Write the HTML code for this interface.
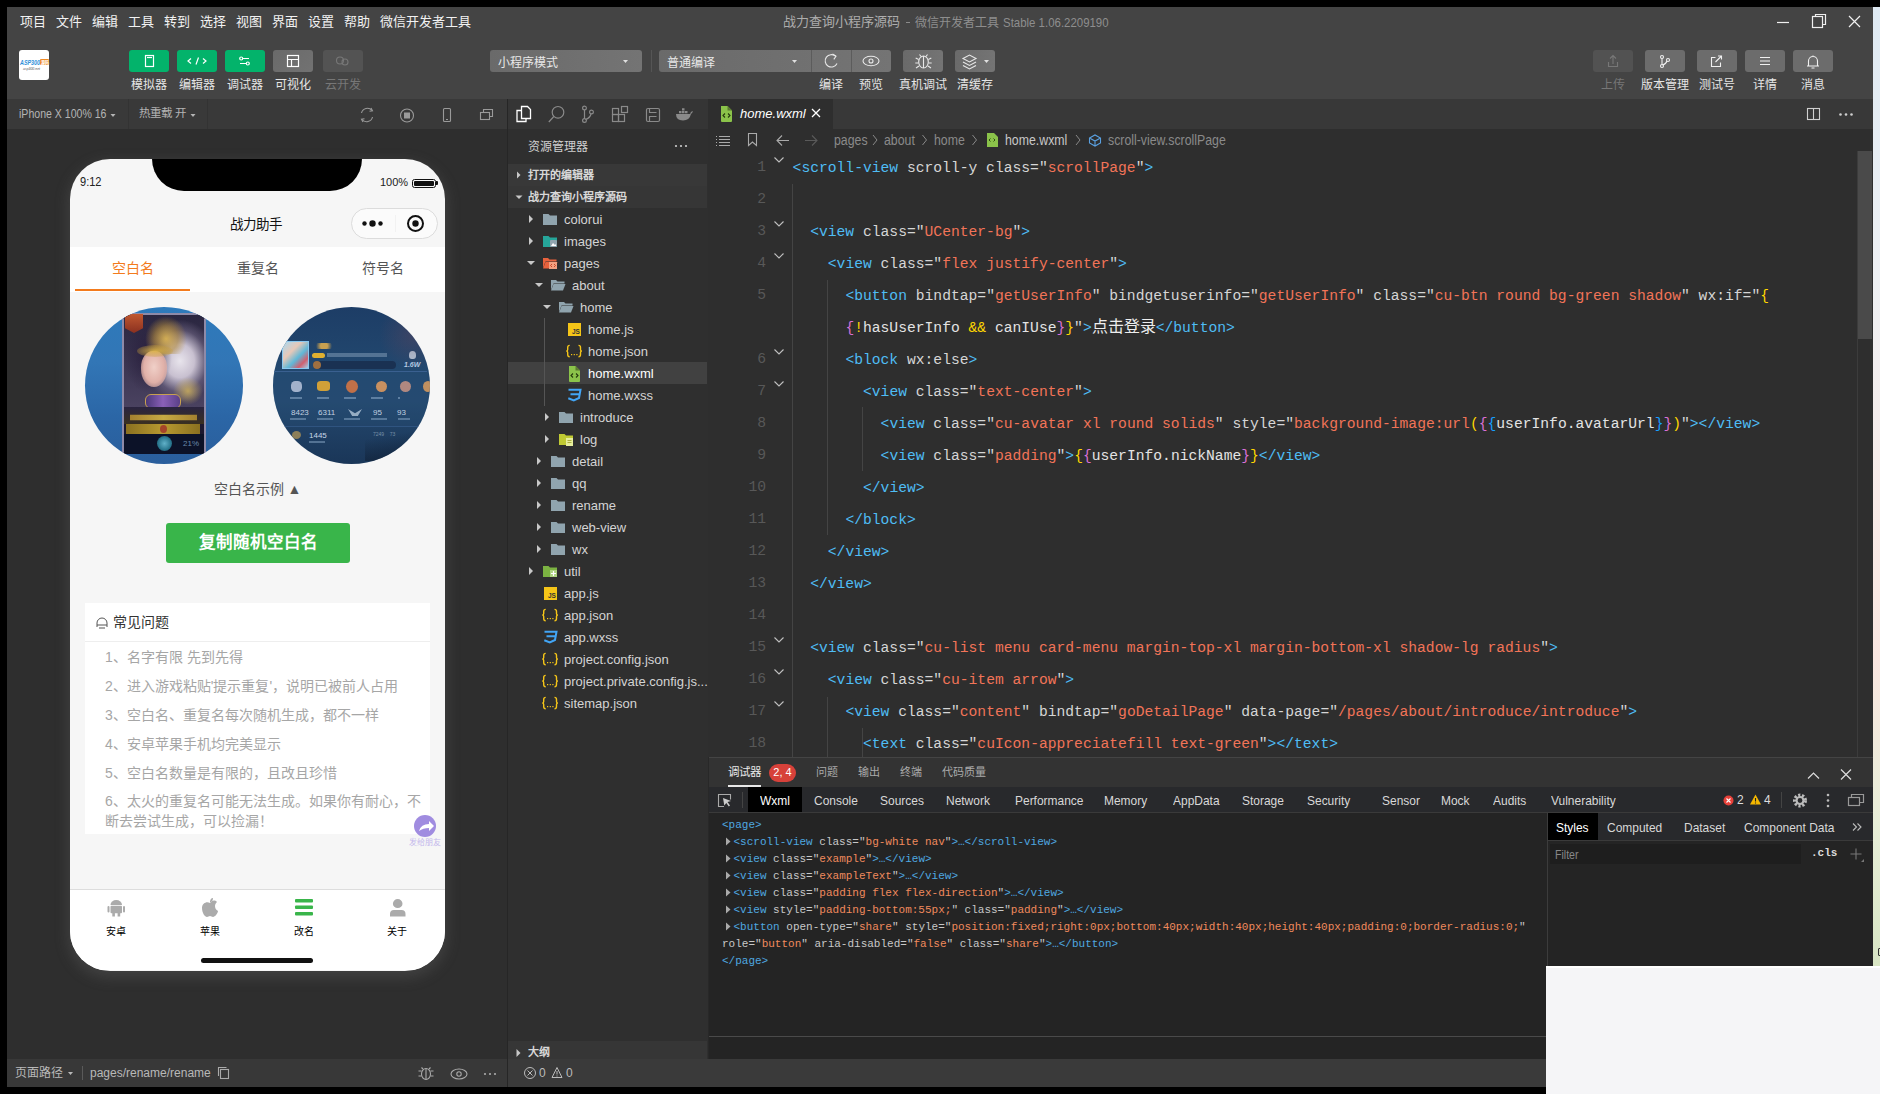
<!DOCTYPE html>
<html lang="zh-CN">
<head>
<meta charset="utf-8">
<style>
*{box-sizing:border-box;margin:0;padding:0}
html,body{width:1880px;height:1094px;overflow:hidden;background:#000;font-family:"Liberation Sans",sans-serif;color:#ddd}
.a{position:absolute}
.t{position:absolute;white-space:nowrap;line-height:1}
.code{font-family:"Liberation Mono",monospace;font-size:14.667px;line-height:18px;color:#ddd}
.lnum{font-family:"Liberation Mono",monospace;font-size:14.667px;line-height:18px;color:#585858;text-align:right}
.cj{font-family:"Liberation Sans",sans-serif;font-size:16px}
.dtab{top:794px;font-size:13px;color:#d8d8d8;transform:scaleX(0.92)!important}
.dcode{font-family:"Liberation Mono",monospace;font-size:11px;line-height:13px}
.sq{transform-origin:0 50%;transform:scaleX(0.88)}
svg{position:absolute;overflow:visible}
/* frame */
#strip{left:1873px;top:7px;width:7px;height:1087px;background:linear-gradient(#dfeaf3 0%,#eef0f3 25%,#f8ebe8 45%,#fae6e0 60%,#e8eed8 75%,#d8e5c4 88%,#d8e5c4 100%)}
#lightrect{left:1546px;top:966px;width:334px;height:128px;background:#f5f5f7}
#hdr{left:7px;top:7px;width:1866px;height:92px;background:#444}
.menu{top:15px;font-size:13px;color:#f2f2f2}
.tbtn{top:50px;width:40px;height:22px;border-radius:3px}
.green{background:#03b36b}
.gray{background:#6c6c6c}
.lbl{top:79px;font-size:12px;color:#e6e6e6;text-align:center;width:60px;margin-left:-30px}
.dd{top:50px;height:22px;border-radius:3px;background:linear-gradient(90deg,#6a6a6a,#747474)}
</style>
</head>
<body>
<div id="strip" class="a"></div>
<div id="hdr" class="a"></div>
<!-- menu -->
<div class="t menu" style="left:20px">项目</div>
<div class="t menu" style="left:56px">文件</div>
<div class="t menu" style="left:92px">编辑</div>
<div class="t menu" style="left:128px">工具</div>
<div class="t menu" style="left:164px">转到</div>
<div class="t menu" style="left:200px">选择</div>
<div class="t menu" style="left:236px">视图</div>
<div class="t menu" style="left:272px">界面</div>
<div class="t menu" style="left:308px">设置</div>
<div class="t menu" style="left:344px">帮助</div>
<div class="t menu" style="left:380px">微信开发者工具</div>
<div class="t" style="left:783px;top:15px;font-size:13px;color:#adadad">战力查询小程序源码</div>
<div class="a" style="left:906px;top:22px;width:4px;height:1px;background:#8a8a8a"></div>
<div class="t" style="left:915px;top:17px;font-size:12px;color:#8e8e8e">微信开发者工具</div>
<div class="t sq" id="ttl" style="left:1003px;top:16px;font-size:13px;color:#8e8e8e">Stable 1.06.2209190</div>

<!-- logo -->
<div class="a" style="left:19px;top:50px;width:30px;height:30px;background:#fff;border-radius:3px"></div>
<svg style="left:0;top:0" width="1" height="1">
 <text x="20" y="64.5" font-family="Liberation Sans" font-size="7" font-weight="bold" font-style="italic" fill="#2e8fd8" textLength="20" lengthAdjust="spacingAndGlyphs">ASP300</text>
 <rect x="40" y="59" width="9" height="6" rx="1" fill="#f08a24"/>
 <text x="40.5" y="64" font-family="Liberation Sans" font-size="5" font-weight="bold" fill="#fff" textLength="8" lengthAdjust="spacingAndGlyphs">源码</text>
 <text x="23" y="69.5" font-family="Liberation Sans" font-size="4" font-style="italic" fill="#555" textLength="17" lengthAdjust="spacingAndGlyphs">asp300.net</text>
</svg>
<!-- toolbar buttons -->
<div class="a tbtn green" style="left:129px"></div>
<div class="a tbtn green" style="left:177px"></div>
<div class="a tbtn green" style="left:225px"></div>
<div class="a tbtn gray" style="left:273px;background:linear-gradient(135deg,#6a6a6a,#727272)"></div>
<div class="a tbtn" style="left:323px;background:#535353"></div>
<svg style="left:0;top:0" width="1" height="1">
 <g fill="none" stroke="#fff" stroke-width="1.2">
  <rect x="145.5" y="55.5" width="8" height="11"/><line x1="147" y1="57.5" x2="152" y2="57.5"/>
  <path d="M191 58.5 l-3 2.5 l3 2.5 M203 58.5 l3 2.5 l-3 2.5 M198.5 57.5 l-2.5 7"/>
  <path d="M243 58.5 h6 M240 63.5 h6"/><circle cx="241.2" cy="58.5" r="1.5"/><circle cx="247.8" cy="63.5" r="1.5"/>
  <rect x="287.5" y="55.5" width="11" height="11"/><path d="M287.5 59.5 h11 M291.5 59.5 v7"/>
 </g>
 <g fill="none" stroke="#777" stroke-width="1.1"><circle cx="340" cy="60.5" r="3.5"/><circle cx="345" cy="62" r="3"/></g>
</svg>
<div class="t lbl" style="left:149px">模拟器</div>
<div class="t lbl" style="left:197px">编辑器</div>
<div class="t lbl" style="left:245px">调试器</div>
<div class="t lbl" style="left:293px">可视化</div>
<div class="t lbl" style="left:343px;color:#777">云开发</div>
<!-- dropdowns -->
<div class="a dd" style="left:490px;width:152px"></div>
<div class="t" style="left:498px;top:57px;font-size:12px;color:#e8e8e8">小程序模式</div>
<div class="a" style="left:651px;top:50px;width:1px;height:22px;background:#555"></div>
<div class="a dd" style="left:659px;width:232px"></div>
<div class="a" style="left:811px;top:50px;width:1px;height:22px;background:#5c5c5c"></div>
<div class="a" style="left:851px;top:50px;width:1px;height:22px;background:#5c5c5c"></div>
<div class="t" style="left:667px;top:57px;font-size:12px;color:#e8e8e8">普通编译</div>
<div class="a dd" style="left:903px;width:40px"></div>
<div class="a dd" style="left:955px;width:40px"></div>
<svg style="left:0;top:0" width="1" height="1">
 <g fill="#e0e0e0"><path d="M623 60 h5 l-2.5 3z"/><path d="M792 60 h5 l-2.5 3z"/><path d="M984 60 h5 l-2.5 3z"/></g>
 <g fill="none" stroke="#e8e8e8" stroke-width="1.1">
  <path d="M835.5 56.2 A6.2 6.2 0 1 0 837 63.5"/><path d="M832.5 54 l3.5 2.2 l-2.2 3.2"/>
  <ellipse cx="871" cy="61" rx="8" ry="4.8"/><circle cx="871" cy="61" r="2"/>
  <ellipse cx="923.5" cy="62" rx="4.8" ry="6"/><path d="M923.5 56 v12 M918.7 59.5 l-3 -1.5 M928.3 59.5 l3 -1.5 M918.5 63 h-3.2 M928.5 63 h3.2 M919 66 l-3 2 M928 66 l3 2 M921 56.5 l-1.5 -2 M926 56.5 l1.5 -2"/>
  <path d="M963 58.5 l6.5 -3.5 l6.5 3.5 l-6.5 3.5z M963 62 l6.5 3.5 l6.5 -3.5 M963 65.5 l6.5 3.5 l6.5 -3.5"/>
 </g>
</svg>
<div class="t lbl" style="left:831px">编译</div>
<div class="t lbl" style="left:871px">预览</div>
<div class="t lbl" style="left:923px;width:70px;margin-left:-35px">真机调试</div>
<div class="t lbl" style="left:975px">清缓存</div>
<!-- right buttons -->
<div class="a tbtn" style="left:1593px;background:#525252"></div>
<div class="a tbtn gray" style="left:1645px"></div>
<div class="a tbtn gray" style="left:1697px"></div>
<div class="a tbtn gray" style="left:1745px"></div>
<div class="a tbtn gray" style="left:1793px"></div>
<svg style="left:0;top:0" width="1" height="1">
 <g fill="none" stroke="#777" stroke-width="1.1"><path d="M1608.5 62 v4.5 h9 v-4.5 M1613 64 v-8 M1610 58.5 l3-3 l3 3"/></g>
 <g fill="none" stroke="#f0f0f0" stroke-width="1.1">
  <circle cx="1662" cy="57" r="1.5"/><circle cx="1662" cy="66" r="1.5"/><circle cx="1668" cy="60" r="1.5"/><path d="M1662 58.5 v6 M1667 61 q-1 3 -4.5 4"/>
  <path d="M1715.5 57.5 h-4 v9 h9 v-4 M1718 56 h3.5 v3.5 M1721.5 56 l-6 6"/>
  <path d="M1760 57.5 h10 M1760 61 h10 M1760 64.5 h10"/>
  <path d="M1807 66 h12 M1808.5 66 v-5 a4.5 4.5 0 0 1 9 0 v5 M1811.5 68 h3 M1813 55.5 v1"/>
 </g>
</svg>
<div class="t lbl" style="left:1613px;color:#777">上传</div>
<div class="t lbl" style="left:1665px">版本管理</div>
<div class="t lbl" style="left:1717px">测试号</div>
<div class="t lbl" style="left:1765px">详情</div>
<div class="t lbl" style="left:1813px">消息</div>
<!-- window controls -->
<svg style="left:0;top:0" width="1" height="1">
 <g fill="none" stroke="#f0f0f0" stroke-width="1.2">
  <path d="M1777 22.5 h12"/>
  <rect x="1812.5" y="16.5" width="10" height="11"/><path d="M1815.5 16.5 v-2 h10 v10 h-3"/>
  <path d="M1849 16 l11 11 M1860 16 l-11 11"/>
 </g>
</svg>

<!-- ===== simulator panel ===== -->
<div class="a" style="left:7px;top:99px;width:500px;height:988px;background:#2e2e2e"></div>
<div class="a" style="left:7px;top:99px;width:500px;height:30px;background:#393939"></div>
<div class="a" style="left:128px;top:99px;width:1px;height:30px;background:#333"></div>
<div class="a" style="left:207px;top:99px;width:1px;height:30px;background:#333"></div>
<div class="a" style="left:507px;top:99px;width:1px;height:988px;background:#262626"></div>
<div class="t sq" id="iph" style="left:19px;top:108px;font-size:12px;color:#b4b4b4">iPhone X 100% 16</div>
<div class="t" style="left:139px;top:108px;font-size:11.5px;color:#b4b4b4">热重载 开</div>
<svg style="left:0;top:1px" width="1" height="1">
 <g fill="#b4b4b4"><path d="M110.5 113 h5 l-2.5 3z"/><path d="M190.5 113 h5 l-2.5 3z"/></g>
 <g fill="none" stroke="#9a9a9a" stroke-width="1.1">
  <path d="M361.5 112 a6 6 0 0 1 10.5 -2.5 M372.5 116 a6 6 0 0 1 -10.5 2.5"/><path d="M371 107 l1.5 2.8 l-3 0.5 M363 121 l-1.5 -2.8 l3 -0.5"/>
  <circle cx="407" cy="114.5" r="6.5"/>
  <rect x="443.5" y="107.5" width="7" height="13" rx="1"/><path d="M446 118.5 h2"/>
  <rect x="480.5" y="111.5" width="9" height="7"/><path d="M483.5 111.5 v-3 h9 v7 h-3"/>
 </g>
 <rect x="404" y="111.5" width="6" height="6" fill="#9a9a9a"/>
</svg>
<div class="a" style="left:7px;top:1059px;width:500px;height:28px;background:#383838"></div>
<div class="t" style="left:15px;top:1067px;font-size:12px;color:#b8b8b8">页面路径</div>
<div class="a" style="left:82px;top:1066px;width:1px;height:14px;background:#5a5a5a"></div>
<div class="t" style="left:90px;top:1067px;font-size:12px;color:#b8b8b8">pages/rename/rename</div>
<svg style="left:0;top:0" width="1" height="1">
 <g fill="#b8b8b8"><path d="M68 1072 h5 l-2.5 3z"/></g>
 <g fill="none" stroke="#aaa" stroke-width="1.1">
  <rect x="220.5" y="1069.5" width="8" height="9"/><path d="M218.5 1076 v-8.5 h8"/>
  <ellipse cx="426" cy="1074" rx="4.5" ry="5.5"/><path d="M426 1068.5 v11 M421.5 1071 h-3 M430.5 1071 h3 M421.5 1076 h-3 M430.5 1076 h3 M423 1069 l-1.5-1.5 M429 1069 l1.5-1.5"/>
  <ellipse cx="459" cy="1074" rx="8" ry="5"/><circle cx="459" cy="1074" r="2.2"/>
 </g>
 <g fill="#aaa"><circle cx="485" cy="1074" r="1.1"/><circle cx="490" cy="1074" r="1.1"/><circle cx="495" cy="1074" r="1.1"/></g>
</svg>
<!-- phone -->
<div class="a" style="left:70px;top:159px;width:375px;height:812px;border-radius:40px;background:#f6f6f6;box-shadow:0 5px 14px 2px rgba(110,110,110,0.3);overflow:hidden">
 <div class="a" style="left:82px;top:-2px;width:210px;height:34px;background:#000;border-radius:0 0 32px 32px"></div>
 <div class="t" style="left:9.5px;top:17px;font-size:12px;color:#222;transform:scaleX(.92);transform-origin:0 0">9:12</div>
 <div class="t" style="left:310px;top:18px;font-size:11px;color:#222">100%</div>
 <div class="a" style="left:342px;top:19.5px;width:24px;height:9.5px;border:1.5px solid #111;border-radius:2.5px;padding:1px"><div style="width:100%;height:100%;background:#111;border-radius:1px"></div></div>
 <div class="a" style="left:366px;top:22px;width:2px;height:4px;background:#111;border-radius:0 1px 1px 0"></div>
 <div class="t" style="left:-2px;top:59px;width:375px;text-align:center;font-size:13.5px;color:#111">战力助手</div>
 <div class="a" style="left:281px;top:48.5px;width:87px;height:31px;border-radius:16px;border:1px solid #dcdcdc;background:#fbfbfb"></div>
 <div class="a" style="left:325px;top:56px;width:1px;height:17px;background:#f2f2f2"></div>
 <svg style="left:0;top:0" width="1" height="1">
  <g fill="#111"><circle cx="294.5" cy="64.5" r="2.2"/><circle cx="302.5" cy="64.5" r="3.2"/><circle cx="310.5" cy="64.5" r="2.2"/></g>
  <circle cx="345.5" cy="64.5" r="7.5" fill="none" stroke="#111" stroke-width="2"/><circle cx="345.5" cy="64.5" r="3.2" fill="#111"/>
 </svg>
 <!-- tabs -->
 <div class="a" style="left:0;top:88px;width:375px;height:45px;background:#fff"></div>
 <div class="t" style="left:5px;top:102px;width:115px;text-align:center;font-size:14px;color:#f37b1d">空白名</div>
 <div class="t" style="left:130px;top:102px;width:115px;text-align:center;font-size:14px;color:#555">重复名</div>
 <div class="t" style="left:255px;top:102px;width:115px;text-align:center;font-size:14px;color:#555">符号名</div>
 <div class="a" style="left:5px;top:130px;width:115px;height:2px;background:#f37b1d"></div>

 <!-- content -->
 <div class="a" style="left:15px;top:148px;width:158px;height:157px;border-radius:50%;overflow:hidden;background:linear-gradient(180deg,#2e7abb 0%,#3276b6 35%,#2b66a6 70%,#2a5e9c 100%)">
  <div class="a" style="left:37px;top:6px;width:84px;height:141px;background:#1c1830;border:2px solid #8e8aa8;border-radius:2px"></div>
  <div class="a" style="left:39px;top:8px;width:80px;height:92px;background:radial-gradient(ellipse 30% 40% at 30% 45%,rgba(40,30,60,.9),transparent 100%),radial-gradient(ellipse 45% 45% at 70% 50%,#e8e4ec 0%,#c8c0d0 40%,rgba(120,110,140,.5) 75%,transparent 100%),linear-gradient(180deg,#2a2640 0%,#4a4260 100%)"></div>
  <div class="a" style="left:60px;top:9px;width:42px;height:38px;background:radial-gradient(ellipse at 50% 60%,rgba(220,180,80,.9) 0%,rgba(180,140,60,.6) 40%,transparent 70%)"></div>
  <div class="a" style="left:56px;top:44px;width:26px;height:36px;border-radius:45% 45% 50% 50%;background:radial-gradient(ellipse at 50% 45%,#f0d0c8 0%,#e0b0a8 55%,rgba(200,150,140,.3) 100%)"></div>
  <div class="a" style="left:52px;top:38px;width:36px;height:12px;border-radius:50%;background:radial-gradient(ellipse,rgba(220,180,70,.9) 0%,rgba(200,160,60,.4) 60%,transparent 100%)"></div>
  <div class="a" style="left:40px;top:7px;width:18px;height:19px;background:linear-gradient(#c05830,#8a3020);clip-path:polygon(0 0,100% 0,100% 75%,50% 100%,0 75%)"></div>
  <div class="a" style="left:88px;top:70px;width:30px;height:28px;background:radial-gradient(ellipse at 50% 50%,rgba(210,180,90,.8),transparent 70%)"></div>
  <div class="a" style="left:60px;top:87px;width:36px;height:15px;border-radius:6px;background:linear-gradient(90deg,#4a3878,#8a60b8,#5a4088);border:1px solid #c8a050"></div>
  <div class="a" style="left:39px;top:100px;width:80px;height:17px;background:linear-gradient(180deg,#2a2440,#3a3020)"></div>
  <div class="a" style="left:45px;top:106px;width:67px;height:9px;background:linear-gradient(90deg,#b89030,#e0c048,#b89030);opacity:.85;clip-path:polygon(0 20%,100% 20%,100% 80%,0 80%)"></div>
  <div class="a" style="left:41px;top:117px;width:74px;height:10px;background:linear-gradient(90deg,#8a7020,#b89a30,#8a7020)"></div>
  <div class="a" style="left:75px;top:118px;width:7px;height:8px;border-radius:50%;background:#a03028;opacity:.8"></div>
  <div class="a" style="left:39px;top:127px;width:80px;height:20px;background:#0c1228"></div>
  <div class="a" style="left:72px;top:129px;width:15px;height:15px;border-radius:50%;background:radial-gradient(circle,#60b0c8 0%,#2a7890 60%,#184858 100%)"></div>
  <div class="t" style="left:98px;top:133px;font-size:8px;color:#6a88a8">21%</div>
 </div>
 <div class="a" style="left:203px;top:148px;width:157px;height:157px;border-radius:50%;overflow:hidden;background:linear-gradient(180deg,#1d3d66 0%,#22486f 40%,#24496f 60%,#1f3f63 80%,#1a3658 100%)"><div class="a" style="left:-3px;top:-6px;width:170px;height:170px">
  <div class="a" style="left:0;top:71px;width:157px;height:54px;background:rgba(40,80,120,.25)"></div>
  <div class="a" style="left:12px;top:40px;width:27px;height:28px;background:linear-gradient(135deg,#a8d8f0 0%,#e8c8b8 35%,#60b8d8 60%,#d06070 80%,#a0d0e8 100%);border:1px solid #8ac8f0"></div>
  <div class="a" style="left:43px;top:42px;width:22px;height:6px;background:radial-gradient(circle,#c8a050 30%,transparent 70%)"></div>
  <div class="a" style="left:42px;top:51.5px;width:13px;height:5px;border-radius:3px;background:#e0b030"></div>
  <div class="a" style="left:57px;top:52px;width:60px;height:4px;background:rgba(180,200,220,.35)"></div>
  <div class="a" style="left:43px;top:60px;width:83px;height:8px;border-radius:4px;background:#1a3152"></div>
  <div class="a" style="left:43px;top:60px;width:8px;height:8px;border-radius:50%;background:#a07040"></div>
  <div class="t" style="left:134px;top:60px;font-size:7px;font-style:italic;font-weight:bold;color:#b8d0e8">1.6W</div>
  <div class="a" style="left:139px;top:50px;width:7px;height:8px;border-radius:50% 50% 40% 40%;background:#d8e4f0;opacity:.8"></div>
  <div class="a" style="left:0;top:70px;width:157px;height:1px;background:#3a6090"></div>
  <div class="a" style="left:21px;top:80px;width:11px;height:11px;border-radius:40%;background:#b8c4dc;opacity:.85"></div>
  <div class="a" style="left:47px;top:80px;width:13px;height:10px;border-radius:30%;background:#d0a038"></div>
  <div class="a" style="left:76px;top:79px;width:12px;height:13px;border-radius:50%;background:#c07048"></div>
  <div class="a" style="left:106px;top:80px;width:11px;height:11px;border-radius:50%;background:#c89060"></div>
  <div class="a" style="left:130px;top:80px;width:11px;height:11px;border-radius:50%;background:#b08880"></div>
  <div class="a" style="left:153px;top:80px;width:10px;height:11px;border-radius:50%;background:#c09060"></div>
  <div class="a" style="left:20px;top:96px;width:110px;height:2px;background:repeating-linear-gradient(90deg,rgba(150,180,210,.5) 0 12px,transparent 12px 27px)"></div>
  <div class="t" style="left:21px;top:108px;font-size:8px;color:#c0d0e0">8423</div>
  <div class="t" style="left:48px;top:108px;font-size:8px;color:#c0d0e0">6311</div>
  <div class="a" style="left:78px;top:108px;width:14px;height:7px;background:#c8d8e8;opacity:.7;clip-path:polygon(0 0,50% 60%,100% 0,70% 100%,30% 100%)"></div>
  <div class="t" style="left:103px;top:108px;font-size:8px;color:#c0d0e0">95</div>
  <div class="t" style="left:127px;top:108px;font-size:8px;color:#c0d0e0">93</div>
  <div class="a" style="left:20px;top:117px;width:120px;height:2px;background:repeating-linear-gradient(90deg,rgba(150,180,210,.45) 0 16px,transparent 16px 27px)"></div>
  <div class="a" style="left:0;top:125px;width:157px;height:1px;background:#2f5480"></div>
  <div class="a" style="left:22px;top:130px;width:9px;height:8px;border-radius:50%;background:#a89058;opacity:.8"></div>
  <div class="t" style="left:39px;top:131px;font-size:8px;color:#c8d8e8">1445</div>
  <div class="a" style="left:39px;top:140px;width:16px;height:2px;background:rgba(150,180,210,.45)"></div>
  <div class="t" style="left:103px;top:131px;font-size:5px;color:#7890a8">7249 &nbsp;&nbsp; 73</div>
  <div class="a" style="left:95px;top:130px;width:62px;height:30px;background:linear-gradient(170deg,transparent 20%,rgba(15,30,50,.8) 100%)"></div>
  <div class="a" style="left:110px;top:10px;width:47px;height:60px;background:radial-gradient(circle at 70% 40%,rgba(110,70,90,.35),transparent 70%)"></div>
 </div></div>
 <div class="t" style="left:0;top:323px;width:375px;text-align:center;font-size:14px;color:#555">空白名示例 ▲</div>
 <div class="a" style="left:96px;top:364px;width:184px;height:40px;border-radius:3px;background:#39b54a"></div>
 <div class="t" style="left:96px;top:375px;width:184px;text-align:center;font-size:16.5px;font-weight:bold;color:#fff">复制随机空白名</div>
 <!-- faq card -->
 <div class="a" style="left:15px;top:444px;width:345px;height:231px;background:#fff"></div>
 <div class="a" style="left:15px;top:482px;width:345px;height:1px;background:#eee"></div>
 <svg style="left:0;top:0" width="1" height="1"><g fill="none" stroke="#555" stroke-width="1"><path d="M27 468 v-4 a5 5 0 0 1 10 0 v4 M27 466 h10 M29 469 h6"/></g></svg>
 <div class="t" style="left:43px;top:456px;font-size:14px;color:#333">常见问题</div>
 <div class="t" style="left:35px;top:491px;font-size:14px;color:#a6a6a6">1、名字有限 先到先得</div>
 <div class="t" style="left:35px;top:520px;font-size:14px;color:#a6a6a6">2、进入游戏粘贴'提示重复'，说明已被前人占用</div>
 <div class="t" style="left:35px;top:549px;font-size:14px;color:#a6a6a6">3、空白名、重复名每次随机生成，都不一样</div>
 <div class="t" style="left:35px;top:578px;font-size:14px;color:#a6a6a6">4、安卓苹果手机均完美显示</div>
 <div class="t" style="left:35px;top:607px;font-size:14px;color:#a6a6a6">5、空白名数量是有限的，且改且珍惜</div>
 <div class="t" style="left:35px;top:635px;font-size:14px;color:#a6a6a6">6、太火的重复名可能无法生成。如果你有耐心，不</div>
 <div class="t" style="left:35px;top:655px;font-size:14px;color:#a6a6a6">断去尝试生成，可以捡漏！</div>
 <div class="a" style="left:344px;top:656px;width:22px;height:22px;border-radius:50%;background:#a08ce0"></div>
 <svg style="left:0;top:0" width="1" height="1"><path d="M349 672 q2 -7 10 -7 v-3 l5 5 l-5 5 v-3 q-6 0 -10 3z" fill="#fff"/></svg>
 <div class="t" style="left:339px;top:680px;font-size:8px;color:#c4b8ec">发给朋友</div>
 <!-- tabbar -->
 <div class="a" style="left:0;top:730px;width:375px;height:81px;background:#fff;border-top:1px solid #ddd"></div>
 <svg style="left:0;top:0" width="1" height="1">
  <g fill="#ababab">
   <path d="M40.5 746 a5.75 5 0 0 1 11.5 0z"/><rect x="40.5" y="746.8" width="11.5" height="7.5" rx="1"/><rect x="37.5" y="747" width="2" height="6.5" rx="1"/><rect x="53" y="747" width="2" height="6.5" rx="1"/><rect x="42.3" y="754" width="2.6" height="3.5"/><rect x="47.6" y="754" width="2.6" height="3.5"/>
   <path d="M140 744 c-3 -2 -8 0 -8 5 c0 5 3 9 5 9 c1 0 2 -1 3 -1 c1 0 2 1 3 1 c2 0 5 -4 5 -6 c-2 -1 -3 -3 -3 -5 c0 -2 1 -3 2 -4 c-2 -2 -5 -2 -7 1z M140 743 c0 -2 1 -4 3 -4 c0 2 -1 4 -3 4z"/>
   <path d="M327.7 740 a4.8 4.8 0 0 1 4.8 4.8 a4.8 4.3 0 0 1 -4.8 4.3 a4.8 4.3 0 0 1 -4.8 -4.3 a4.8 4.8 0 0 1 4.8 -4.8z M320 757.5 v-2.5 a4 4 0 0 1 4 -4 h7.5 a4 4 0 0 1 4 4 v2.5z"/>
  </g>
  <g fill="#39b54a"><rect x="225" y="740" width="18" height="3.5" rx="1"/><rect x="225" y="746.5" width="18" height="3.5" rx="1"/><rect x="225" y="753" width="18" height="3.5" rx="1"/></g>
 </svg>
 <div class="t" style="left:21px;top:768px;width:50px;text-align:center;font-size:10px;color:#000">安卓</div>
 <div class="t" style="left:115px;top:768px;width:50px;text-align:center;font-size:10px;color:#000">苹果</div>
 <div class="t" style="left:209px;top:768px;width:50px;text-align:center;font-size:10px;color:#000">改名</div>
 <div class="t" style="left:302px;top:768px;width:50px;text-align:center;font-size:10px;color:#000">关于</div>
 <div class="a" style="left:131px;top:799px;width:112px;height:5px;border-radius:3px;background:#111"></div>
</div>


<!-- ===== activity bar + explorer ===== -->
<div class="a" style="left:508px;top:99px;width:200px;height:960px;background:#2f2f2f"></div>
<div class="a" style="left:508px;top:99px;width:200px;height:30px;background:#353535"></div>
<svg style="left:0;top:0" width="1" height="1">
 <g fill="none" stroke="#fff" stroke-width="1.3"><path d="M521 110.5 h-4 v11 h9 v-3"/><path d="M521.5 106.5 h6 l3 3 v9 h-9z"/></g>
 <g fill="none" stroke="#8a8a8a" stroke-width="1.2">
  <circle cx="558" cy="112.3" r="5.8"/><path d="M553.8 116.5 l-5 5.5"/>
  <circle cx="584.5" cy="108" r="1.9"/><circle cx="584.5" cy="120.5" r="1.9"/><circle cx="591.5" cy="112" r="1.9"/><path d="M584.5 110 v8.6 M591 114 q-1 4 -5.5 5.5"/>
  <rect x="612.5" y="114.5" width="6" height="7"/><rect x="618.5" y="114.5" width="6" height="7"/><rect x="612.5" y="108.5" width="6" height="6"/><rect x="621.5" y="106.5" width="6" height="6"/>
  <rect x="646.5" y="108.5" width="13" height="13" rx="1.5"/><path d="M649.5 108.5 v4 h7 M649.5 121.5 v-5 h7"/>
 </g>
 <path d="M676 114 h15 q-1.5 6.5 -8 6.5 q-7 0 -7 -6.5z M679 111 h2.5 v2.3 h-2.5z M682 111 h2.5 v2.3 h-2.5z M685 111 h2.5 v2.3 h-2.5z M682 108.3 h2.5 v2.3 h-2.5z M690 113.5 q1 -2.5 3 -2.5 q-0.5 2 -2 3z" fill="#8a8a8a"/>
</svg>
<div class="t" style="left:528px;top:141px;font-size:12px;color:#d0d0d0">资源管理器</div>
<svg style="left:0;top:0" width="1" height="1"><g fill="#ccc"><circle cx="676" cy="146" r="1.1"/><circle cx="681" cy="146" r="1.1"/><circle cx="686" cy="146" r="1.1"/></g></svg>
<div class="a" style="left:508px;top:164px;width:199px;height:22px;background:#383838"></div>
<div class="a" style="left:508px;top:186px;width:199px;height:22px;background:#363636"></div>
<svg style="left:0;top:0" width="1" height="1"><path d="M517 171.5 l3.5 3.5 l-3.5 3.5z" fill="#c8c8c8"/><path d="M515.5 195.5 h7 l-3.5 3.5z" fill="#c8c8c8"/></svg>
<div class="t" style="left:528px;top:170px;font-size:11px;font-weight:bold;color:#d8d8d8">打开的编辑器</div>
<div class="t" style="left:528px;top:192px;font-size:11px;font-weight:bold;color:#d8d8d8">战力查询小程序源码</div>
<div class="a" style="left:508px;top:362px;width:199px;height:22px;background:#414141"></div>
<div class="a" style="left:544px;top:318px;width:1px;height:88px;background:#555"></div>
<div class="a" style="left:708px;top:129px;width:1px;height:930px;background:#282828"></div>
<div class="t" style="left:564px;top:213px;font-size:13px;color:#d4d4d4">colorui</div>
<div class="t" style="left:564px;top:235px;font-size:13px;color:#d4d4d4">images</div>
<div class="t" style="left:564px;top:257px;font-size:13px;color:#d4d4d4">pages</div>
<div class="t" style="left:572px;top:279px;font-size:13px;color:#d4d4d4">about</div>
<div class="t" style="left:580px;top:301px;font-size:13px;color:#d4d4d4">home</div>
<div class="t" style="left:588px;top:323px;font-size:13px;color:#d4d4d4">home.js</div>
<div class="t" style="left:588px;top:345px;font-size:13px;color:#d4d4d4">home.json</div>
<div class="t" style="left:588px;top:367px;font-size:13px;color:#fff">home.wxml</div>
<div class="t" style="left:588px;top:389px;font-size:13px;color:#d4d4d4">home.wxss</div>
<div class="t" style="left:580px;top:411px;font-size:13px;color:#d4d4d4">introduce</div>
<div class="t" style="left:580px;top:433px;font-size:13px;color:#d4d4d4">log</div>
<div class="t" style="left:572px;top:455px;font-size:13px;color:#d4d4d4">detail</div>
<div class="t" style="left:572px;top:477px;font-size:13px;color:#d4d4d4">qq</div>
<div class="t" style="left:572px;top:499px;font-size:13px;color:#d4d4d4">rename</div>
<div class="t" style="left:572px;top:521px;font-size:13px;color:#d4d4d4">web-view</div>
<div class="t" style="left:572px;top:543px;font-size:13px;color:#d4d4d4">wx</div>
<div class="t" style="left:564px;top:565px;font-size:13px;color:#d4d4d4">util</div>
<div class="t" style="left:564px;top:587px;font-size:13px;color:#d4d4d4">app.js</div>
<div class="t" style="left:564px;top:609px;font-size:13px;color:#d4d4d4">app.json</div>
<div class="t" style="left:564px;top:631px;font-size:13px;color:#d4d4d4">app.wxss</div>
<div class="t" style="left:564px;top:653px;font-size:13px;color:#d4d4d4">project.config.json</div>
<div class="t" style="left:564px;top:675px;font-size:13px;color:#d4d4d4">project.private.config.js...</div>
<div class="t" style="left:564px;top:697px;font-size:13px;color:#d4d4d4">sitemap.json</div>
<svg style="left:0;top:0" width="1" height="1"><path d="M529 215 l4 4 l-4 4z" fill="#c8c8c8"/><path d="M543 214 h5.5 l1.5 1.5 h7 v9.5 h-14z" fill="#90a4ae"/><path d="M529 237 l4 4 l-4 4z" fill="#c8c8c8"/><path d="M543 236 h5.5 l1.5 1.5 h7 v9.5 h-14z" fill="#26a69a"/><rect x="550" y="240" width="7" height="7" rx="1" fill="#90a4ae"/><path d="M551 246 l2-3 l2 2 l1-1 v2z" fill="#fff"/><path d="M527 261 h8 l-4 4z" fill="#c8c8c8"/><path d="M543 258 h5 l1.5 1.5 h7 v2 h-11 l-2.5 6.5z" fill="#e8623d"/><path d="M545.5 262 h12 l-2.5 6.5 h-12z" fill="#e8623d"/><rect x="549" y="262" width="8" height="7" fill="#f3a080"/><path d="M552 264 l-1.5 1.5 l1.5 1.5 M554 264 l1.5 1.5 l-1.5 1.5" stroke="#c03010" fill="none" stroke-width=".8"/><path d="M535 283 h8 l-4 4z" fill="#c8c8c8"/><path d="M551 280 h5 l1.5 1.5 h7 v2 h-11 l-2.5 6.5z" fill="#90a4ae"/><path d="M553.5 284 h12 l-2.5 6.5 h-12z" fill="#90a4ae"/><path d="M543 305 h8 l-4 4z" fill="#c8c8c8"/><path d="M559 302 h5 l1.5 1.5 h7 v2 h-11 l-2.5 6.5z" fill="#90a4ae"/><path d="M561.5 306 h12 l-2.5 6.5 h-12z" fill="#90a4ae"/><rect x="568" y="323" width="13" height="13" fill="#f5c518"/><text x="572" y="334" font-size="6.5" font-family="Liberation Sans" font-weight="bold" fill="#333">JS</text><g fill="none" stroke="#f5c518" stroke-width="1.4"><path d="M569.7 345.4 q-2 0 -2 2 v2 q0 1.6 -1.4 1.6 q1.4 0 1.4 1.6 v2 q0 2.2 2 2.2 M578.5 345.4 q2 0 2 2 v2 q0 1.6 1.4 1.6 q-1.4 0 -1.4 1.6 v2 q0 2.2 -2 2.2"/></g><g fill="#f5c518"><rect x="571.0" y="354.0" width="1.2" height="1.2"/><rect x="573.7" y="354.0" width="1.2" height="1.2"/><rect x="576.3" y="354.0" width="1.2" height="1.2"/></g><path d="M569.0 366.0 h6.5 l4.5 4.5 v10.5 q0 1 -1 1 h-9 q-1 0 -1 -1z" fill="#8bc34a"/><path d="M575.5 366.0 v4.5 h4.5z" fill="#5a7a30"/><path d="M573.0 373.5 l-2 2 l2 2 M576.0 373.5 l2 2 l-2 2" stroke="#243a0c" fill="none" stroke-width="1.1"/><path d="M568.5 389.8 H580.5 L579.0 398.0 L573.8 400.5 L568.3 398.3 M570.5 394.2 H579.7" stroke="#42a5f5" fill="none" stroke-width="2"/><path d="M545 413 l4 4 l-4 4z" fill="#c8c8c8"/><path d="M559 412 h5.5 l1.5 1.5 h7 v9.5 h-14z" fill="#90a4ae"/><path d="M545 435 l4 4 l-4 4z" fill="#c8c8c8"/><path d="M559 434 h5.5 l1.5 1.5 h7 v9.5 h-14z" fill="#c0ca33"/><rect x="566" y="438" width="7" height="8" fill="#e6ee9c"/><path d="M567.5 440.5 h4 M567.5 442.5 h4" stroke="#9e9d24" stroke-width=".8"/><path d="M537 457 l4 4 l-4 4z" fill="#c8c8c8"/><path d="M551 456 h5.5 l1.5 1.5 h7 v9.5 h-14z" fill="#90a4ae"/><path d="M537 479 l4 4 l-4 4z" fill="#c8c8c8"/><path d="M551 478 h5.5 l1.5 1.5 h7 v9.5 h-14z" fill="#90a4ae"/><path d="M537 501 l4 4 l-4 4z" fill="#c8c8c8"/><path d="M551 500 h5.5 l1.5 1.5 h7 v9.5 h-14z" fill="#90a4ae"/><path d="M537 523 l4 4 l-4 4z" fill="#c8c8c8"/><path d="M551 522 h5.5 l1.5 1.5 h7 v9.5 h-14z" fill="#90a4ae"/><path d="M537 545 l4 4 l-4 4z" fill="#c8c8c8"/><path d="M551 544 h5.5 l1.5 1.5 h7 v9.5 h-14z" fill="#90a4ae"/><path d="M529 567 l4 4 l-4 4z" fill="#c8c8c8"/><path d="M543 566 h5.5 l1.5 1.5 h7 v9.5 h-14z" fill="#7cb342"/><rect x="550" y="570" width="7" height="7" fill="#aed581"/><path d="M553.5 571 v5 M551 573.5 h5" stroke="#fff" stroke-width="1.2"/><rect x="544" y="587" width="13" height="13" fill="#f5c518"/><text x="548" y="598" font-size="6.5" font-family="Liberation Sans" font-weight="bold" fill="#333">JS</text><g fill="none" stroke="#f5c518" stroke-width="1.4"><path d="M545.7 609.4 q-2 0 -2 2 v2 q0 1.6 -1.4 1.6 q1.4 0 1.4 1.6 v2 q0 2.2 2 2.2 M554.5 609.4 q2 0 2 2 v2 q0 1.6 1.4 1.6 q-1.4 0 -1.4 1.6 v2 q0 2.2 -2 2.2"/></g><g fill="#f5c518"><rect x="547.0" y="618.0" width="1.2" height="1.2"/><rect x="549.7" y="618.0" width="1.2" height="1.2"/><rect x="552.3" y="618.0" width="1.2" height="1.2"/></g><path d="M544.5 631.8 H556.5 L555.0 640.0 L549.8 642.5 L544.3 640.3 M546.5 636.2 H555.7" stroke="#42a5f5" fill="none" stroke-width="2"/><g fill="none" stroke="#f5c518" stroke-width="1.4"><path d="M545.7 653.4 q-2 0 -2 2 v2 q0 1.6 -1.4 1.6 q1.4 0 1.4 1.6 v2 q0 2.2 2 2.2 M554.5 653.4 q2 0 2 2 v2 q0 1.6 1.4 1.6 q-1.4 0 -1.4 1.6 v2 q0 2.2 -2 2.2"/></g><g fill="#f5c518"><rect x="547.0" y="662.0" width="1.2" height="1.2"/><rect x="549.7" y="662.0" width="1.2" height="1.2"/><rect x="552.3" y="662.0" width="1.2" height="1.2"/></g><g fill="none" stroke="#f5c518" stroke-width="1.4"><path d="M545.7 675.4 q-2 0 -2 2 v2 q0 1.6 -1.4 1.6 q1.4 0 1.4 1.6 v2 q0 2.2 2 2.2 M554.5 675.4 q2 0 2 2 v2 q0 1.6 1.4 1.6 q-1.4 0 -1.4 1.6 v2 q0 2.2 -2 2.2"/></g><g fill="#f5c518"><rect x="547.0" y="684.0" width="1.2" height="1.2"/><rect x="549.7" y="684.0" width="1.2" height="1.2"/><rect x="552.3" y="684.0" width="1.2" height="1.2"/></g><g fill="none" stroke="#f5c518" stroke-width="1.4"><path d="M545.7 697.4 q-2 0 -2 2 v2 q0 1.6 -1.4 1.6 q1.4 0 1.4 1.6 v2 q0 2.2 2 2.2 M554.5 697.4 q2 0 2 2 v2 q0 1.6 1.4 1.6 q-1.4 0 -1.4 1.6 v2 q0 2.2 -2 2.2"/></g><g fill="#f5c518"><rect x="547.0" y="706.0" width="1.2" height="1.2"/><rect x="549.7" y="706.0" width="1.2" height="1.2"/><rect x="552.3" y="706.0" width="1.2" height="1.2"/></g></svg>

<div class="a" style="left:508px;top:1041px;width:199px;height:18px;background:#363636"></div>
<svg style="left:0;top:0" width="1" height="1"><path d="M516.5 1049 l4 4 l-4 4z" fill="#c8c8c8"/></svg>
<div class="t" style="left:528px;top:1047px;font-size:11px;font-weight:bold;color:#d8d8d8">大纲</div>

<!-- ===== editor ===== -->
<div class="a" style="left:708px;top:99px;width:1165px;height:658px;background:#2e2e2e"></div>
<div class="a" style="left:708px;top:99px;width:1165px;height:30px;background:#383838"></div>
<div class="a" style="left:708px;top:99px;width:125px;height:30px;background:#2e2e2e"></div>
<svg style="left:0;top:0" width="1" height="1">
 <path d="M721.0 106.0 h6.5 l4.5 4.5 v10.5 q0 1 -1 1 h-9 q-1 0 -1 -1z" fill="#8bc34a"/><path d="M727.5 106.0 v4.5 h4.5z" fill="#5a7a30"/><path d="M725.0 113.5 l-2 2 l2 2 M728.0 113.5 l2 2 l-2 2" stroke="#243a0c" fill="none" stroke-width="1.1"/>
 <path d="M812 109 l8 8 M820 109 l-8 8" stroke="#fff" stroke-width="1.3"/>
</svg>
<div class="t" style="left:740px;top:107px;font-size:13px;font-style:italic;color:#fff">home.wxml</div>
<svg style="left:0;top:0" width="1" height="1">
 <g fill="none" stroke="#aaa" stroke-width="1.1">
  <path d="M719 136.5 h11 M719 139.5 h11 M719 142.5 h11 M719 145.5 h11"/><path d="M716 136.5 h1 M716 139.5 h1 M716 142.5 h1 M716 145.5 h1"/>
  <path d="M748.5 133.5 h8 v12 l-4 -3.5 l-4 3.5z"/>
  <path d="M777 140.5 h12 M782 135.5 l-5 5 l5 5"/>
 </g>
 <g fill="none" stroke="#5a5a5a" stroke-width="1.1"><path d="M805 140.5 h12 M812 135.5 l5 5 l-5 5"/></g>
 <g fill="none" stroke="#888" stroke-width="1"><path d="M873 135 l4 5 l-4 5 M922.5 135 l4 5 l-4 5 M972.5 135 l4 5 l-4 5 M1076 135 l4 5 l-4 5"/></g>
 <path d="M987 133 h7 l4 4 v10 h-11z" fill="#8bc34a"/><path d="M990.5 138.5 l-1.5 1.5 l1.5 1.5 M993.5 138.5 l1.5 1.5 l-1.5 1.5" stroke="#2f4f10" fill="none" stroke-width="1"/>
 <g fill="none" stroke="#5aa0e0" stroke-width="1.1"><path d="M1089.5 138 l5.5 -3 l5.5 3 v5 l-5.5 3 l-5.5 -3z M1089.5 138 l5.5 3 l5.5 -3 M1095 141 v5"/></g>
</svg>
<div class="t sq" style="left:834px;top:133px;font-size:14px;color:#8a8a8a">pages</div>
<div class="t sq" style="left:884px;top:133px;font-size:14px;color:#8a8a8a">about</div>
<div class="t sq" style="left:934px;top:133px;font-size:14px;color:#8a8a8a">home</div>
<div class="t sq" style="left:1005px;top:133px;font-size:14px;color:#c8c8c8">home.wxml</div>
<div class="t sq" style="left:1108px;top:133px;font-size:14px;color:#8a8a8a">scroll-view.scrollPage</div>

<svg style="left:0;top:0" width="1" height="1">
 <g fill="none" stroke="#d0d0d0" stroke-width="1.1"><rect x="1807.5" y="108.5" width="12" height="11"/><path d="M1813.5 108.5 v11"/></g>
 <g fill="#d0d0d0"><circle cx="1840.5" cy="114.5" r="1.3"/><circle cx="1846" cy="114.5" r="1.3"/><circle cx="1851.5" cy="114.5" r="1.3"/></g>
</svg>
<!-- scrollbar -->
<div class="a" style="left:1857px;top:151px;width:1px;height:606px;background:#3c3c3c"></div>
<div class="a" style="left:1858px;top:151px;width:14px;height:188px;background:#4a4a4a"></div>
<!-- guides -->
<div class="a" style="left:792px;top:184px;width:1px;height:573px;background:#444"></div>
<div class="a" style="left:827px;top:280px;width:1px;height:255px;background:#444"></div>
<div class="a" style="left:862px;top:407px;width:1px;height:64px;background:#444"></div>
<div class="a" style="left:827px;top:697px;width:1px;height:60px;background:#444"></div>
<div class="a" style="left:862px;top:728px;width:1px;height:29px;background:#444"></div>
<div class="a" style="left:810px;top:280px;width:1px;height:0px;background:#444"></div>
<div class="a" style="left:709px;top:129px;width:1148px;height:628px;overflow:hidden"><div class="t code" style="left:83.6px;top:30px"><span style="color:#4fbdf5">&lt;scroll-view</span><span style="color:#d6d6d6"> scroll-y</span><span style="color:#d6d6d6"> class=</span><span style="color:#d6d6d6">"</span><span style="color:#f27458">scrollPage</span><span style="color:#d6d6d6">"</span><span style="color:#4fbdf5">&gt;</span></div><div class="t lnum" style="left:0;width:57px;top:29px">1</div><div class="t code" style="left:83.6px;top:62px"></div><div class="t lnum" style="left:0;width:57px;top:61px">2</div><div class="t code" style="left:101.2px;top:94px"><span style="color:#4fbdf5">&lt;view</span><span style="color:#d6d6d6"> class=</span><span style="color:#d6d6d6">"</span><span style="color:#f27458">UCenter-bg</span><span style="color:#d6d6d6">"</span><span style="color:#4fbdf5">&gt;</span></div><div class="t lnum" style="left:0;width:57px;top:93px">3</div><div class="t code" style="left:118.8px;top:126px"><span style="color:#4fbdf5">&lt;view</span><span style="color:#d6d6d6"> class=</span><span style="color:#d6d6d6">"</span><span style="color:#f27458">flex justify-center</span><span style="color:#d6d6d6">"</span><span style="color:#4fbdf5">&gt;</span></div><div class="t lnum" style="left:0;width:57px;top:125px">4</div><div class="t code" style="left:136.4px;top:158px"><span style="color:#4fbdf5">&lt;button</span><span style="color:#d6d6d6"> bindtap=</span><span style="color:#d6d6d6">"</span><span style="color:#f27458">getUserInfo</span><span style="color:#d6d6d6">"</span><span style="color:#d6d6d6"> bindgetuserinfo=</span><span style="color:#d6d6d6">"</span><span style="color:#f27458">getUserInfo</span><span style="color:#d6d6d6">"</span><span style="color:#d6d6d6"> class=</span><span style="color:#d6d6d6">"</span><span style="color:#f27458">cu-btn round bg-green shadow</span><span style="color:#d6d6d6">"</span><span style="color:#d6d6d6"> wx:if=</span><span style="color:#d6d6d6">"</span><span style="color:#ffd700">{</span></div><div class="t lnum" style="left:0;width:57px;top:157px">5</div><div class="t code" style="left:136.4px;top:189px"><span style="color:#da70d6">{</span><span style="color:#ffd700">!</span><span style="color:#e4e4e4">hasUserInfo </span><span style="color:#ffd700">&amp;&amp;</span><span style="color:#e4e4e4"> canIUse</span><span style="color:#da70d6">}</span><span style="color:#ffd700">}</span><span style="color:#d6d6d6">"</span><span style="color:#4fbdf5">&gt;</span><span class="cj" style="color:#eee">点击登录</span><span style="color:#4fbdf5">&lt;/button&gt;</span></div><div class="t code" style="left:136.4px;top:222px"><span style="color:#4fbdf5">&lt;block</span><span style="color:#d6d6d6"> wx:else</span><span style="color:#4fbdf5">&gt;</span></div><div class="t lnum" style="left:0;width:57px;top:221px">6</div><div class="t code" style="left:154.0px;top:254px"><span style="color:#4fbdf5">&lt;view</span><span style="color:#d6d6d6"> class=</span><span style="color:#d6d6d6">"</span><span style="color:#f27458">text-center</span><span style="color:#d6d6d6">"</span><span style="color:#4fbdf5">&gt;</span></div><div class="t lnum" style="left:0;width:57px;top:253px">7</div><div class="t code" style="left:171.6px;top:286px"><span style="color:#4fbdf5">&lt;view</span><span style="color:#d6d6d6"> class=</span><span style="color:#d6d6d6">"</span><span style="color:#f27458">cu-avatar xl round solids</span><span style="color:#d6d6d6">"</span><span style="color:#d6d6d6"> style=</span><span style="color:#d6d6d6">"</span><span style="color:#f27458">background-image:url</span><span style="color:#ffd700">(</span><span style="color:#da70d6">{</span><span style="color:#179fff">{</span><span style="color:#e4e4e4">userInfo.avatarUrl</span><span style="color:#179fff">}</span><span style="color:#da70d6">}</span><span style="color:#ffd700">)</span><span style="color:#d6d6d6">"</span><span style="color:#4fbdf5">&gt;&lt;/view&gt;</span></div><div class="t lnum" style="left:0;width:57px;top:285px">8</div><div class="t code" style="left:171.6px;top:318px"><span style="color:#4fbdf5">&lt;view</span><span style="color:#d6d6d6"> class=</span><span style="color:#d6d6d6">"</span><span style="color:#f27458">padding</span><span style="color:#d6d6d6">"</span><span style="color:#4fbdf5">&gt;</span><span style="color:#ffd700">{</span><span style="color:#da70d6">{</span><span style="color:#e4e4e4">userInfo.nickName</span><span style="color:#da70d6">}</span><span style="color:#ffd700">}</span><span style="color:#4fbdf5">&lt;/view&gt;</span></div><div class="t lnum" style="left:0;width:57px;top:317px">9</div><div class="t code" style="left:154.0px;top:350px"><span style="color:#4fbdf5">&lt;/view&gt;</span></div><div class="t lnum" style="left:0;width:57px;top:349px">10</div><div class="t code" style="left:136.4px;top:382px"><span style="color:#4fbdf5">&lt;/block&gt;</span></div><div class="t lnum" style="left:0;width:57px;top:381px">11</div><div class="t code" style="left:118.8px;top:414px"><span style="color:#4fbdf5">&lt;/view&gt;</span></div><div class="t lnum" style="left:0;width:57px;top:413px">12</div><div class="t code" style="left:101.2px;top:446px"><span style="color:#4fbdf5">&lt;/view&gt;</span></div><div class="t lnum" style="left:0;width:57px;top:445px">13</div><div class="t code" style="left:83.6px;top:478px"></div><div class="t lnum" style="left:0;width:57px;top:477px">14</div><div class="t code" style="left:101.2px;top:510px"><span style="color:#4fbdf5">&lt;view</span><span style="color:#d6d6d6"> class=</span><span style="color:#d6d6d6">"</span><span style="color:#f27458">cu-list menu card-menu margin-top-xl margin-bottom-xl shadow-lg radius</span><span style="color:#d6d6d6">"</span><span style="color:#4fbdf5">&gt;</span></div><div class="t lnum" style="left:0;width:57px;top:509px">15</div><div class="t code" style="left:118.8px;top:542px"><span style="color:#4fbdf5">&lt;view</span><span style="color:#d6d6d6"> class=</span><span style="color:#d6d6d6">"</span><span style="color:#f27458">cu-item arrow</span><span style="color:#d6d6d6">"</span><span style="color:#4fbdf5">&gt;</span></div><div class="t lnum" style="left:0;width:57px;top:541px">16</div><div class="t code" style="left:136.4px;top:574px"><span style="color:#4fbdf5">&lt;view</span><span style="color:#d6d6d6"> class=</span><span style="color:#d6d6d6">"</span><span style="color:#f27458">content</span><span style="color:#d6d6d6">"</span><span style="color:#d6d6d6"> bindtap=</span><span style="color:#d6d6d6">"</span><span style="color:#f27458">goDetailPage</span><span style="color:#d6d6d6">"</span><span style="color:#d6d6d6"> data-page=</span><span style="color:#d6d6d6">"</span><span style="color:#f27458">/pages/about/introduce/introduce</span><span style="color:#d6d6d6">"</span><span style="color:#4fbdf5">&gt;</span></div><div class="t lnum" style="left:0;width:57px;top:573px">17</div><div class="t code" style="left:154.0px;top:606px"><span style="color:#4fbdf5">&lt;text</span><span style="color:#d6d6d6"> class=</span><span style="color:#d6d6d6">"</span><span style="color:#f27458">cuIcon-appreciatefill text-green</span><span style="color:#d6d6d6">"</span><span style="color:#4fbdf5">&gt;&lt;/text&gt;</span></div><div class="t lnum" style="left:0;width:57px;top:605px">18</div></div><svg style="left:0;top:0" width="1" height="1"><g fill="none" stroke="#c0c0c0" stroke-width="1.1"><path d="M774.5 157.5 l4.5 4.5 l4.5 -4.5"/><path d="M774.5 221.5 l4.5 4.5 l4.5 -4.5"/><path d="M774.5 253.5 l4.5 4.5 l4.5 -4.5"/><path d="M774.5 349.5 l4.5 4.5 l4.5 -4.5"/><path d="M774.5 381.5 l4.5 4.5 l4.5 -4.5"/><path d="M774.5 637.5 l4.5 4.5 l4.5 -4.5"/><path d="M774.5 669.5 l4.5 4.5 l4.5 -4.5"/><path d="M774.5 701.5 l4.5 4.5 l4.5 -4.5"/></g></svg>

<!-- ===== devtools ===== -->
<div class="a" style="left:709px;top:757px;width:1164px;height:30px;background:#333"></div>
<div class="a" style="left:709px;top:757px;width:1164px;height:1px;background:#444"></div>
<div class="t" style="left:728px;top:767px;font-size:11.5px;color:#e8e8e8">调试器</div>
<div class="a" style="left:728px;top:785px;width:33px;height:2px;background:#e8e8e8"></div>
<div class="a" style="left:769px;top:764px;width:27px;height:18px;border-radius:9px;background:#d7413a"></div>
<div class="t" style="left:769px;top:767px;width:27px;text-align:center;font-size:11px;color:#fff">2, 4</div>
<div class="t" style="left:816px;top:767px;font-size:11px;color:#aaa">问题</div>
<div class="t" style="left:858px;top:767px;font-size:11px;color:#aaa">输出</div>
<div class="t" style="left:900px;top:767px;font-size:11px;color:#aaa">终端</div>
<div class="t" style="left:942px;top:767px;font-size:11px;color:#aaa">代码质量</div>
<svg style="left:0;top:0" width="1" height="1"><g fill="none" stroke="#ddd" stroke-width="1.2"><path d="M1808 778.5 l5.5 -5.5 l5.5 5.5 M1841 769.5 l10 10 M1851 769.5 l-10 10"/></g></svg>
<div class="a" style="left:709px;top:787px;width:1164px;height:26px;background:#28292c"></div>
<div class="a" style="left:709px;top:812px;width:1164px;height:1px;background:#3a3a3a"></div>
<div class="a" style="left:748px;top:787px;width:54px;height:25px;background:#000"></div>
<div class="a" style="left:742px;top:792px;width:1px;height:16px;background:#444"></div>
<svg style="left:0;top:0" width="1" height="1"><g fill="none" stroke="#aaa" stroke-width="1.1"><path d="M724 806.5 h-5.5 v-12 h12 v5"/></g><path d="M723 798 l8 3 l-3.5 1 l2.5 3.5 l-1.2 1 l-2.5 -3.5 l-2 2.5z" fill="#ccc"/></svg>
<div class="t sq dtab" style="left:760px;color:#fff">Wxml</div>
<div class="t sq dtab" style="left:814px;color:#d8d8d8">Console</div>
<div class="t sq dtab" style="left:880px;color:#d8d8d8">Sources</div>
<div class="t sq dtab" style="left:945.5px;color:#d8d8d8">Network</div>
<div class="t sq dtab" style="left:1014.5px;color:#d8d8d8">Performance</div>
<div class="t sq dtab" style="left:1104px;color:#d8d8d8">Memory</div>
<div class="t sq dtab" style="left:1172.7px;color:#d8d8d8">AppData</div>
<div class="t sq dtab" style="left:1242px;color:#d8d8d8">Storage</div>
<div class="t sq dtab" style="left:1306.5px;color:#d8d8d8">Security</div>
<div class="t sq dtab" style="left:1381.5px;color:#d8d8d8">Sensor</div>
<div class="t sq dtab" style="left:1440.5px;color:#d8d8d8">Mock</div>
<div class="t sq dtab" style="left:1493px;color:#d8d8d8">Audits</div>
<div class="t sq dtab" style="left:1550.7px;color:#d8d8d8">Vulnerability</div>

<svg style="left:0;top:0" width="1" height="1">
 <circle cx="1728.5" cy="800.5" r="5" fill="#e8413a"/><path d="M1726.5 798.5 l4 4 M1730.5 798.5 l-4 4" stroke="#fff" stroke-width="1.1"/>
 <path d="M1755.5 794.5 l5.5 10 h-11z" fill="#f5b800"/><path d="M1755.5 798 v3.5 M1755.5 802.5 v1" stroke="#222" stroke-width="1.1"/>
 <g fill="#bbb"><circle cx="1828" cy="795" r="1.3"/><circle cx="1828" cy="800.5" r="1.3"/><circle cx="1828" cy="806" r="1.3"/></g>
 <circle cx="1800" cy="800.5" r="5.5" fill="none" stroke="#bbb" stroke-width="3" stroke-dasharray="2.2 1.7"/><circle cx="1800" cy="800.5" r="3.5" fill="none" stroke="#bbb" stroke-width="2.2"/>
 <g fill="none" stroke="#999" stroke-width="1.2"><rect x="1848.5" y="797.5" width="11" height="8"/><path d="M1851.5 797.5 v-3 h12 v8 h-4"/></g>
</svg>
<div class="a" style="left:1781px;top:792px;width:1px;height:16px;background:#444"></div>
<div class="t" style="left:1737px;top:794px;font-size:12px;color:#ddd">2</div>
<div class="t" style="left:1764px;top:794px;font-size:12px;color:#ddd">4</div>
<!-- wxml pane -->
<div class="a" style="left:709px;top:813px;width:838px;height:223px;background:#242424"></div>
<div class="a" style="left:709px;top:1036px;width:838px;height:1px;background:#4a4a4a"></div>
<div class="a" style="left:709px;top:1037px;width:838px;height:22px;background:#242424"></div>
<div class="a" style="left:508px;top:1059px;width:1038px;height:28px;background:#3a3a3a"></div>
<div class="t dcode" style="left:722px;top:819px"><span style="color:#4fa8e0">&lt;page&gt;</span></div>
<div class="t dcode" style="left:733.5px;top:836px"><span style="color:#4fa8e0">&lt;scroll-view</span><span style="color:#c8c8c8"> class=</span><span style="color:#c8c8c8">"</span><span style="color:#f08a5d">bg-white nav</span><span style="color:#c8c8c8">"</span><span style="color:#4fa8e0">&gt;…&lt;/scroll-view&gt;</span></div>
<svg style="left:0;top:0" width="1" height="1"><path d="M726 837.5 l4.5 4 l-4.5 4z" fill="#aaa"/></svg>
<div class="t dcode" style="left:733.5px;top:853px"><span style="color:#4fa8e0">&lt;view</span><span style="color:#c8c8c8"> class=</span><span style="color:#c8c8c8">"</span><span style="color:#f08a5d">example</span><span style="color:#c8c8c8">"</span><span style="color:#4fa8e0">&gt;…&lt;/view&gt;</span></div>
<svg style="left:0;top:0" width="1" height="1"><path d="M726 854.5 l4.5 4 l-4.5 4z" fill="#aaa"/></svg>
<div class="t dcode" style="left:733.5px;top:870px"><span style="color:#4fa8e0">&lt;view</span><span style="color:#c8c8c8"> class=</span><span style="color:#c8c8c8">"</span><span style="color:#f08a5d">exampleText</span><span style="color:#c8c8c8">"</span><span style="color:#4fa8e0">&gt;…&lt;/view&gt;</span></div>
<svg style="left:0;top:0" width="1" height="1"><path d="M726 871.5 l4.5 4 l-4.5 4z" fill="#aaa"/></svg>
<div class="t dcode" style="left:733.5px;top:887px"><span style="color:#4fa8e0">&lt;view</span><span style="color:#c8c8c8"> class=</span><span style="color:#c8c8c8">"</span><span style="color:#f08a5d">padding flex flex-direction</span><span style="color:#c8c8c8">"</span><span style="color:#4fa8e0">&gt;…&lt;/view&gt;</span></div>
<svg style="left:0;top:0" width="1" height="1"><path d="M726 888.5 l4.5 4 l-4.5 4z" fill="#aaa"/></svg>
<div class="t dcode" style="left:733.5px;top:904px"><span style="color:#4fa8e0">&lt;view</span><span style="color:#c8c8c8"> style=</span><span style="color:#c8c8c8">"</span><span style="color:#f08a5d">padding-bottom:55px;</span><span style="color:#c8c8c8">"</span><span style="color:#c8c8c8"> class=</span><span style="color:#c8c8c8">"</span><span style="color:#f08a5d">padding</span><span style="color:#c8c8c8">"</span><span style="color:#4fa8e0">&gt;…&lt;/view&gt;</span></div>
<svg style="left:0;top:0" width="1" height="1"><path d="M726 905.5 l4.5 4 l-4.5 4z" fill="#aaa"/></svg>
<div class="t dcode" style="left:733.5px;top:921px"><span style="color:#4fa8e0">&lt;button</span><span style="color:#c8c8c8"> open-type=</span><span style="color:#c8c8c8">"</span><span style="color:#f08a5d">share</span><span style="color:#c8c8c8">"</span><span style="color:#c8c8c8"> style=</span><span style="color:#c8c8c8">"</span><span style="color:#f08a5d">position:fixed;right:0px;bottom:40px;width:40px;height:40px;padding:0;border-radius:0;</span><span style="color:#c8c8c8">"</span></div>
<svg style="left:0;top:0" width="1" height="1"><path d="M726 922.5 l4.5 4 l-4.5 4z" fill="#aaa"/></svg>
<div class="t dcode" style="left:722px;top:938px"><span style="color:#c8c8c8">role=</span><span style="color:#c8c8c8">"</span><span style="color:#f08a5d">button</span><span style="color:#c8c8c8">"</span><span style="color:#c8c8c8"> aria-disabled=</span><span style="color:#c8c8c8">"</span><span style="color:#f08a5d">false</span><span style="color:#c8c8c8">"</span><span style="color:#c8c8c8"> class=</span><span style="color:#c8c8c8">"</span><span style="color:#f08a5d">share</span><span style="color:#c8c8c8">"</span><span style="color:#4fa8e0">&gt;…&lt;/button&gt;</span></div>
<div class="t dcode" style="left:722px;top:955px"><span style="color:#4fa8e0">&lt;/page&gt;</span></div>

<!-- styles pane -->
<div class="a" style="left:1547px;top:813px;width:326px;height:153px;background:#242424;border-left:1px solid #3c3c3c"></div>
<div class="a" style="left:1548px;top:813px;width:325px;height:28px;background:#28292c;border-bottom:1px solid #3a3a3a"></div>
<div class="a" style="left:1548px;top:813px;width:50px;height:27px;background:#000"></div>
<div class="t sq dtab" style="left:1556px;top:821px;color:#fff">Styles</div>
<div class="t sq dtab" style="left:1607px;top:821px">Computed</div>
<div class="t sq dtab" style="left:1684px;top:821px">Dataset</div>
<div class="t sq dtab" style="left:1743.5px;top:821px">Component Data</div>
<svg style="left:0;top:0" width="1" height="1"><path d="M1853 823.5 l3.5 3.5 l-3.5 3.5 M1857.5 823.5 l3.5 3.5 l-3.5 3.5" fill="none" stroke="#bbb" stroke-width="1.1"/></svg>
<div class="a" style="left:1550px;top:844px;width:251px;height:20px;background:#1e1e1e"></div>
<div class="t sq" style="left:1555px;top:849px;font-size:12px;color:#888">Filter</div>
<div class="t" style="left:1811px;top:848px;font-family:'Liberation Mono',monospace;font-weight:bold;font-size:11px;color:#ddd">.cls</div>
<svg style="left:0;top:0" width="1" height="1"><path d="M1856 848.5 v11 M1850.5 854 h11" stroke="#777" stroke-width="1.1"/><path d="M1864 862 v-3 l-3 3z" fill="#777"/></svg>
<div class="a" style="left:1547px;top:966px;width:326px;height:121px;background:#f5f5f7"></div>
<div class="a" style="left:1546px;top:966px;width:334px;height:128px;background:#f5f5f7;border-top:2px solid #fff"></div>
<div class="a" style="left:1878px;top:948px;width:4px;height:8px;border:1.5px solid #333;border-radius:1px"></div>
<!-- status bar icons bottom middle -->
<svg style="left:0;top:0" width="1" height="1"><g fill="none" stroke="#bbb" stroke-width="1"><circle cx="530" cy="1073" r="5.5"/><path d="M527.5 1070.5 l5 5 M532.5 1070.5 l-5 5 M557 1067.5 l5 10 h-10z M557 1071 v3.5 M557 1075.5 v1"/></g></svg>
<div class="t" style="left:539px;top:1067px;font-size:12px;color:#bbb">0</div>
<div class="t" style="left:566px;top:1067px;font-size:12px;color:#bbb">0</div>

</body>
</html>
